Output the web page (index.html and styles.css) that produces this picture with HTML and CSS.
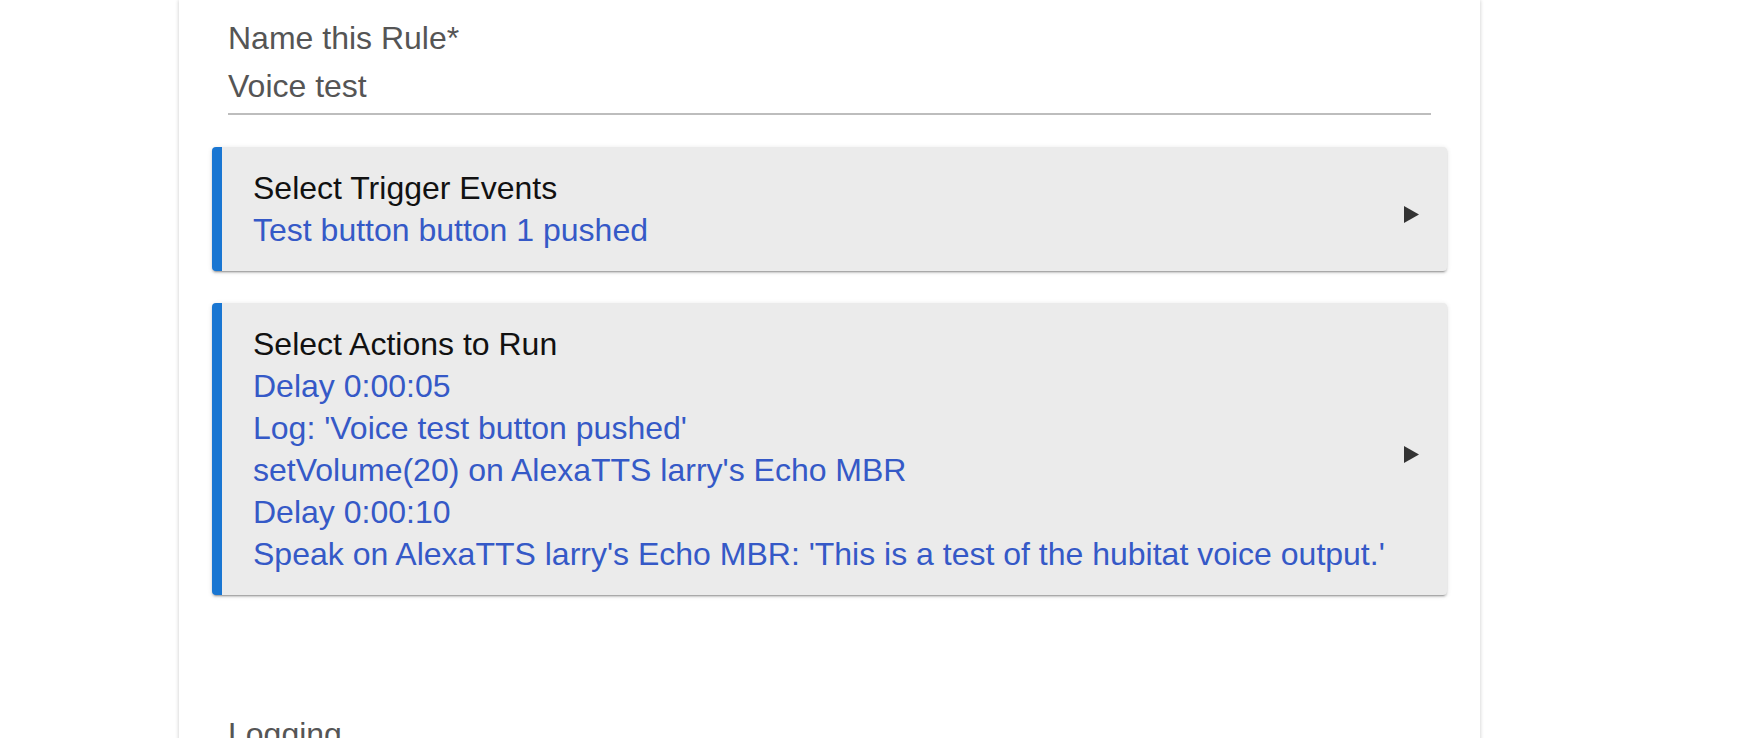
FILE: index.html
```html
<!DOCTYPE html>
<html>
<head>
<meta charset="utf-8">
<link rel="stylesheet" href="styles.css">
</head>
<body>
<div class="panel">
  <div class="field">
    <div class="field-label">Name this Rule*</div>
    <div class="field-input">Voice test</div>
  </div>

  <div class="card">
    <div class="card-body">
      <div class="card-title">Select Trigger Events</div>
      <div class="card-line">Test button button 1 pushed</div>
    </div>
    <svg class="card-arrow" width="15" height="17" viewBox="0 0 15 17"><polygon points="0,0 15,8.5 0,17" fill="#333"/></svg>
  </div>

  <div class="card">
    <div class="card-body">
      <div class="card-title">Select Actions to Run</div>
      <div class="card-line">Delay 0:00:05</div>
      <div class="card-line">Log: 'Voice test button pushed'</div>
      <div class="card-line">setVolume(20) on AlexaTTS larry's Echo MBR</div>
      <div class="card-line">Delay 0:00:10</div>
      <div class="card-line">Speak on AlexaTTS larry's Echo MBR: 'This is a test of the hubitat voice output.'</div>
    </div>
    <svg class="card-arrow" width="15" height="17" viewBox="0 0 15 17"><polygon points="0,0 15,8.5 0,17" fill="#333"/></svg>
  </div>

  <div class="section">
    <div class="section-label">Logging</div>
  </div>
</div>
</body>
</html>
```

FILE: styles.css
```css
html, body {
  margin: 0;
  padding: 0;
  background: #ffffff;
  overflow: hidden;
}

body {
  font-family: "Liberation Sans", Arial, sans-serif;
  font-size: 32px;
  line-height: 42px;
}

.panel {
  box-sizing: border-box;
  width: 1301px;
  min-height: 900px;
  margin-left: 179px;
  padding: 17px 33px 0;
  background: #ffffff;
  box-shadow: 0 0 4px rgba(0, 0, 0, 0.22);
}

.field {
  margin: 0 16px;
}

.field-label {
  color: #555555;
}

.field-input {
  color: #555555;
  margin-top: 6px;
  padding-bottom: 6px;
  border-bottom: 2px solid #bdbdbd;
}

.card {
  display: flex;
  align-items: center;
  margin-top: 32px;
  padding: 20px 28px 20px 31px;
  background: #ebebeb;
  border-left: 10px solid #1976d2;
  border-radius: 4px;
  box-shadow: 0 2px 2px 0 rgba(0, 0, 0, 0.14), 0 3px 1px -2px rgba(0, 0, 0, 0.2), 0 1px 5px 0 rgba(0, 0, 0, 0.12);
}

.card-body {
  flex: 1;
}

.card-title {
  color: #111111;
}

.card-line {
  color: #3559c7;
}

.card-arrow {
  flex: none;
  margin-top: 11px;
}

.section {
  margin-top: 118px;
  margin-left: 16px;
}

.section-label {
  color: #555555;
}
```
